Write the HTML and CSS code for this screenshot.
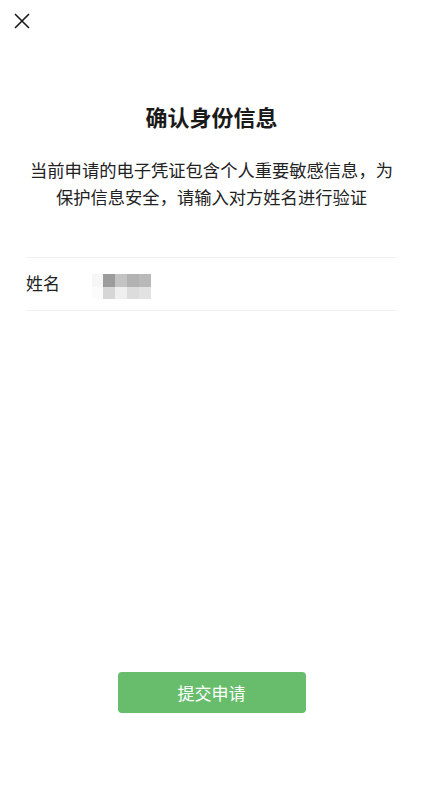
FILE: index.html
```html
<!DOCTYPE html>
<html lang="zh">
<head>
<meta charset="utf-8">
<link rel="stylesheet" href="styles.css">
</head>
<body>
<div class="page">
  <div class="topbar">
    <svg class="close" width="16" height="16" viewBox="0 0 16 16"><path d="M1 1 L15 15 M15 1 L1 15" stroke="#1a1a1a" stroke-width="1.6" fill="none"/></svg>
  </div>
  <h1 class="title">确认身份信息</h1>
  <p class="desc">当前申请的电子凭证包含个人重要敏感信息，为<br>保护信息安全，请输入对方姓名进行验证</p>
  <div class="field">
    <span class="label">姓名</span>
    <div class="mosaic">
      <span class="c" style="background:#f6f6f6"></span>
      <span class="c" style="background:#9c9c9c"></span>
      <span class="c" style="background:#c3c3c3"></span>
      <span class="c" style="background:#b2b2b2"></span>
      <span class="c" style="background:#b9b9b9"></span>
      <span class="c" style="background:#fbfbfb"></span>
      <span class="c" style="background:#d6d6d6"></span>
      <span class="c" style="background:#efefef"></span>
      <span class="c" style="background:#dcdcdc"></span>
      <span class="c" style="background:#e2e2e2"></span>
    </div>
  </div>
  <div class="spacer"></div>
  <div class="actions">
    <button class="submit">提交申请</button>
  </div>
</div>
</body>
</html>
```
FILE: styles.css
```css
html, body {
  margin: 0;
  padding: 0;
  background: #fff;
}
body {
  font-family: "Noto Sans CJK SC", "Noto Sans", sans-serif;
  color: #1a1a1a;
}
.page {
  width: 423px;
  height: 789px;
  display: flex;
  flex-direction: column;
}
.topbar {
  height: 42px;
  padding: 13px 0 0 14px;
  box-sizing: border-box;
}
.close {
  display: block;
}
.title {
  margin: 58px 0 0;
  font-size: 22px;
  font-weight: 700;
  text-align: center;
  line-height: 32px;
}
.desc {
  margin: 24px 0 0;
  font-size: 17.3px;
  line-height: 27px;
  text-align: center;
  color: #222;
}
.field {
  margin: 47px 26px 0;
  border-top: 1px solid #f0f0f0;
  border-bottom: 1px solid #f0f0f0;
  height: 52px;
  display: flex;
  align-items: center;
}
.label {
  font-size: 17px;
  width: 66px;
  color: #222;
  margin-top: -4px;
}
.mosaic {
  display: grid;
  grid-template-columns: 11px repeat(4, 12px);
  grid-template-rows: 13px 12px;
  margin-top: 5px;
}
.c {
  display: block;
}
.spacer {
  flex: 1;
}
.actions {
  display: flex;
  justify-content: center;
  padding-bottom: 76px;
}
.submit {
  width: 188px;
  height: 41px;
  border: none;
  border-radius: 4px;
  background: #68bd6d;
  color: #fff;
  font-family: "Noto Sans CJK SC", sans-serif;
  font-size: 17px;
  padding: 0;
}
```
